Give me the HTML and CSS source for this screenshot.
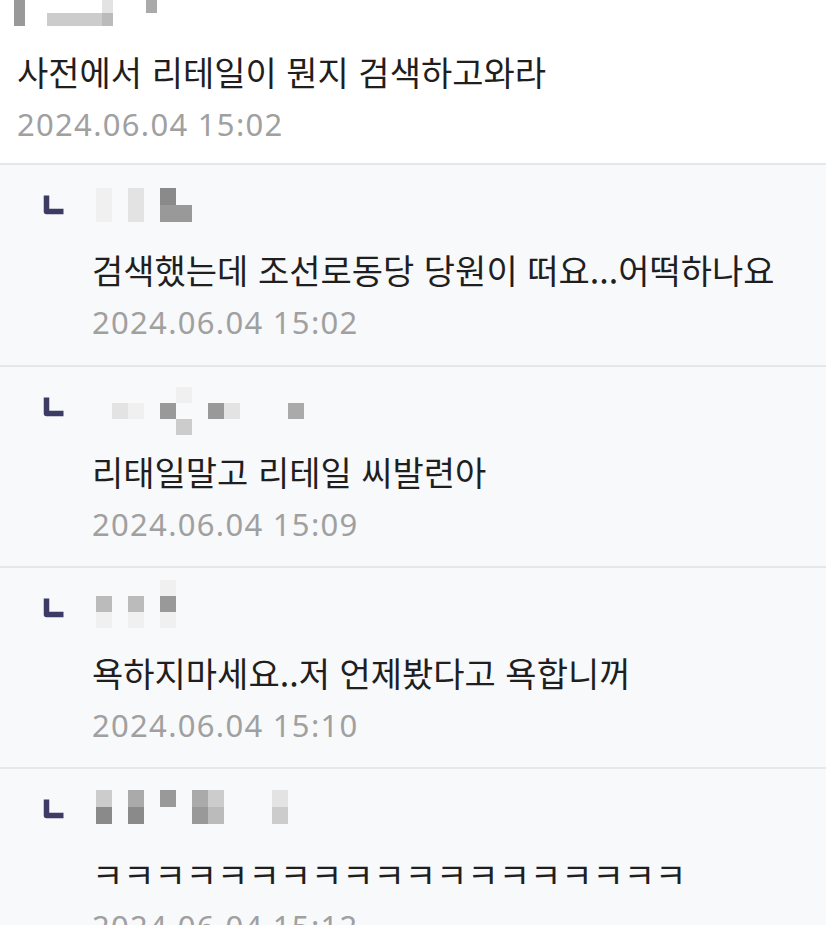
FILE: index.html
```html
<!DOCTYPE html>
<html lang="ko">
<head>
<meta charset="utf-8">
<title>댓글</title>
<link rel="stylesheet" href="styles.css">
</head>
<body>
<div class="list">
  <div class="comment">
    <div class="top-mosaic">
      <i class="t6"></i><i class="t0"></i><i class="t0"></i><i class="t0"></i><i class="t0"></i><i class="t0"></i><i class="t0"></i><i class="t0"></i><i class="t2"></i><i class="t0"></i><i class="t0"></i><i class="t0"></i><i class="t5"></i>
      <i class="t6"></i><i class="t0"></i><i class="t0"></i><i class="t3"></i><i class="t3"></i><i class="t3"></i><i class="t3"></i><i class="t3"></i><i class="t4"></i><i class="t0"></i><i class="t0"></i><i class="t0"></i><i class="t0"></i>
    </div>
    <p class="text">사전에서 리테일이 뭔지 검색하고와라</p>
    <p class="date">2024.06.04 15:02</p>
  </div>

  <div class="reply first">
    <div class="head">
      <svg class="arrow" viewBox="0 0 22 20" width="22" height="20"><path d="M3.5 0.5 V16.5 H20.5" fill="none" stroke="#3b3b66" stroke-width="5.5" stroke-linejoin="round"/></svg>
      <div class="mosaic m1">
        <i class="t1"></i><i class="t0"></i><i class="t2"></i><i class="t0"></i><i class="t7"></i><i class="t0"></i>
        <i class="t1"></i><i class="t0"></i><i class="t2"></i><i class="t0"></i><i class="t6"></i><i class="t6"></i>
      </div>
    </div>
    <p class="text">검색했는데 조선로동당 당원이 떠요...어떡하나요</p>
    <p class="date">2024.06.04 15:02</p>
  </div>

  <div class="reply">
    <div class="head">
      <svg class="arrow" viewBox="0 0 22 20" width="22" height="20"><path d="M3.5 0.5 V16.5 H20.5" fill="none" stroke="#3b3b66" stroke-width="5.5" stroke-linejoin="round"/></svg>
      <div class="mosaic m2">
        <i class="t0"></i><i class="t0"></i><i class="t0"></i><i class="t0"></i><i class="t0"></i><i class="t1"></i><i class="t0"></i><i class="t0"></i><i class="t0"></i><i class="t0"></i><i class="t0"></i><i class="t0"></i><i class="t0"></i>
        <i class="t0"></i><i class="t2"></i><i class="t1"></i><i class="t0"></i><i class="t6"></i><i class="t0"></i><i class="t0"></i><i class="t6"></i><i class="t2"></i><i class="t0"></i><i class="t0"></i><i class="t0"></i><i class="t5"></i>
        <i class="t0"></i><i class="t0"></i><i class="t0"></i><i class="t0"></i><i class="t0"></i><i class="t3"></i><i class="t0"></i><i class="t0"></i><i class="t0"></i><i class="t0"></i><i class="t0"></i><i class="t0"></i><i class="t0"></i>
      </div>
    </div>
    <p class="text">리태일말고 리테일 씨발련아</p>
    <p class="date">2024.06.04 15:09</p>
  </div>

  <div class="reply">
    <div class="head">
      <svg class="arrow" viewBox="0 0 22 20" width="22" height="20"><path d="M3.5 0.5 V16.5 H20.5" fill="none" stroke="#3b3b66" stroke-width="5.5" stroke-linejoin="round"/></svg>
      <div class="mosaic m3">
        <i class="t0"></i><i class="t0"></i><i class="t0"></i><i class="t0"></i><i class="t1"></i>
        <i class="t4"></i><i class="t0"></i><i class="t4"></i><i class="t0"></i><i class="t6"></i>
        <i class="t1"></i><i class="t0"></i><i class="t1"></i><i class="t0"></i><i class="t1"></i>
      </div>
    </div>
    <p class="text">욕하지마세요..저 언제봤다고 욕합니꺼</p>
    <p class="date">2024.06.04 15:10</p>
  </div>

  <div class="reply">
    <div class="head">
      <svg class="arrow" viewBox="0 0 22 20" width="22" height="20"><path d="M3.5 0.5 V16.5 H20.5" fill="none" stroke="#3b3b66" stroke-width="5.5" stroke-linejoin="round"/></svg>
      <div class="mosaic m4">
        <i class="t3"></i><i class="t0"></i><i class="t5"></i><i class="t0"></i><i class="t6"></i><i class="t0"></i><i class="t5"></i><i class="t3"></i><i class="t0"></i><i class="t0"></i><i class="t0"></i><i class="t2"></i>
        <i class="t7"></i><i class="t0"></i><i class="t7"></i><i class="t0"></i><i class="t0"></i><i class="t0"></i><i class="t6"></i><i class="t4"></i><i class="t0"></i><i class="t0"></i><i class="t0"></i><i class="t3"></i>
      </div>
    </div>
    <p class="text">ㅋㅋㅋㅋㅋㅋㅋㅋㅋㅋㅋㅋㅋㅋㅋㅋㅋㅋㅋ</p>
    <p class="date">2024.06.04 15:12</p>
  </div>
</div>
</body>
</html>
```

FILE: styles.css
```css
html, body {
  margin: 0;
  padding: 0;
  background: #ffffff;
}

body {
  font-family: "Noto Sans CJK KR", "Noto Sans", sans-serif;
  overflow: hidden;
}

.list {
  display: flex;
  flex-direction: column;
}

.comment {
  background: #ffffff;
  padding: 0 0 13px 17px;
}

.reply {
  background: #f8f9fb;
  border-top: 2px solid #e6e7ea;
  padding: 23px 0 16px 92px;
  height: 160px;
}

.reply.first {
  height: 161px;
}

.text {
  margin: 0;
  font-size: 34px;
  line-height: 52px;
  color: #1f1f1f;
  white-space: nowrap;
}

.date {
  margin: 0;
  font-family: "Noto Sans", "Open Sans", sans-serif;
  font-size: 31px;
  letter-spacing: 1.3px;
  line-height: 52px;
  color: #a0a0a0;
  white-space: nowrap;
}

.reply .text {
  margin-top: 22px;
}

.head {
  display: flex;
  align-items: center;
  height: 34px;
  margin-left: -49px;
}

.arrow {
  display: block;
  flex: none;
  margin-right: 31px;
}

.top-mosaic {
  display: grid;
  grid-template-columns: repeat(13, 11px);
  grid-auto-rows: 13px;
  margin-left: -3px;
  margin-bottom: 20px;
}

.mosaic {
  display: grid;
  grid-auto-rows: 16px;
  filter: blur(0.6px);
}

.m1 { grid-template-columns: repeat(6, 16px); grid-auto-rows: 17px; }
.m2 { grid-template-columns: repeat(13, 16px); margin-top: 8px; }
.m3 { grid-template-columns: repeat(5, 16px); margin-top: -8px; }
.m4 { grid-template-columns: repeat(12, 16px); grid-auto-rows: 17px; margin-top: -4px; }

.top-mosaic i, .mosaic i { display: block; }
.t0 { background: transparent; }
.t1 { background: #f0f0f0; }
.t2 { background: #e3e3e3; }
.t3 { background: #cccccc; }
.t4 { background: #bbbbbb; }
.t5 { background: #aaaaaa; }
.t6 { background: #999999; }
.t7 { background: #8a8a8a; }
```
